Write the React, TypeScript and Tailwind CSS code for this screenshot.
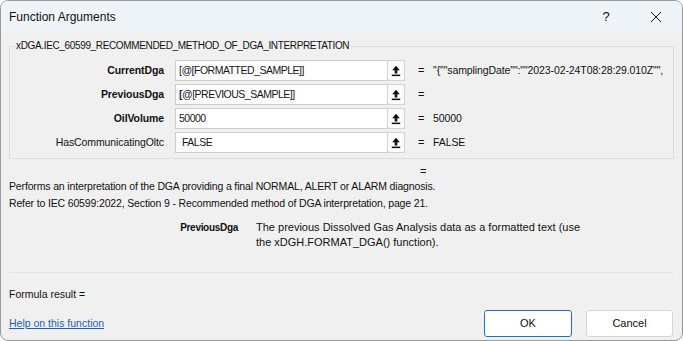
import React from "react";

function UpIcon() {
  return (
    <svg width="10" height="12" viewBox="0 0 10 12" className="block">
      <path d="M5 0.8 L1.2 5.2 H3.7 V8.6 H6.3 V5.2 H8.8 Z" fill="#111" />
      <rect x="0.8" y="9.6" width="8.4" height="1.5" fill="#111" />
    </svg>
  );
}

function Row({ label, bold, value, result, caret, indent }: { label: string; bold?: boolean; value: string; result: string; caret?: boolean; indent?: boolean }) {
  return (
    <div className="flex items-center h-[21px]">
      <div className={"w-[154px] text-right text-[10.5px] tracking-[-0.1px] text-[#111] " + (bold ? "font-bold" : "")}>{label}</div>
      <div className="ml-[11px] w-[230px] h-[21px] flex bg-white border border-[#cdcdcd]">
        <div className={"flex-1 flex items-center text-[10.5px] tracking-[-0.5px] text-[#161616] " + (indent ? "pl-[6px]" : "pl-[3px]")}>
          {caret ? (
            <>
              <span className="text-[#1b1b70] font-bold">[</span>
              {value}
            </>
          ) : (
            value
          )}
        </div>
        <div className="w-[18px] flex items-center justify-center bg-[#fbfbfb] border border-[#d3d3d3] rounded-[2px] -my-[1px] -mr-[1px] h-[21px]">
          <UpIcon />
        </div>
      </div>
      <div className="ml-[13px] w-[15px] text-[11px] text-[#111]">=</div>
      <div className="text-[10.5px] tracking-[-0.1px] text-[#111] whitespace-nowrap">{result}</div>
    </div>
  );
}

export default function App() {
  return (
    <div className="w-[683px] h-[341px] bg-[#f0f0f0] rounded-[8px] border border-[#9a9a9a] overflow-hidden flex flex-col" style={{ fontFamily: '"Liberation Sans", Arial, sans-serif' }}>
      <div className="h-[32px] bg-[#eff4f9] flex items-center pl-[8px] shrink-0">
        <div className="text-[12px] text-[#111] flex-1">Function Arguments</div>
        <div className="text-[13px] text-[#111] w-[20px] text-center mr-[34px]">?</div>
        <svg width="12" height="12" viewBox="0 0 12 12" className="mr-[20px]">
          <path d="M1 1 L11 11 M11 1 L1 11" stroke="#1a1a1a" strokeWidth="1" />
        </svg>
      </div>
      <fieldset className="mx-[8px] mt-[6px] border border-[#dcdcdc] pb-[5px] pt-[0px] shrink-0">
        <legend className="ml-[5px] px-[1px] text-[10px] tracking-[-0.35px] leading-[14px] text-[#111]">xDGA.IEC_60599_RECOMMENDED_METHOD_OF_DGA_INTERPRETATION</legend>
        <div className="flex flex-col gap-[3px] mt-[7px]">
          <Row label="CurrentDga" bold value="[@[FORMATTED_SAMPLE]]" result={'"{""samplingDate"":""2023-02-24T08:28:29.010Z"",'} />
          <Row label="PreviousDga" bold value="@[PREVIOUS_SAMPLE]]" caret result="" />
          <Row label="OilVolume" bold value="50000" result="50000" />
          <Row label="HasCommunicatingOltc" value="FALSE" result="FALSE" indent />
        </div>
      </fieldset>
      <div className="text-[11px] text-[#111] pl-[419px] mt-[5px] leading-[14px] shrink-0">=</div>
      <div className="pl-[8px] mt-0 text-[10.5px] tracking-[-0.15px] leading-[17px] text-[#111] shrink-0">
        <div>Performs an interpretation of the DGA providing a final NORMAL, ALERT or ALARM diagnosis.</div>
        <div>Refer to IEC 60599:2022, Section 9 - Recommended method of DGA interpretation, page 21.</div>
      </div>
      <div className="flex mt-[8px] leading-[15px] text-[#111] shrink-0">
        <div className="w-[237px] text-right font-bold text-[10px] tracking-[-0.3px]">PreviousDga</div>
        <div className="ml-[18px] w-[340px] text-[11px]">The previous Dissolved Gas Analysis data as a formatted text (use the xDGH.FORMAT_DGA() function).</div>
      </div>
      <div className="mx-[8px] mt-[22px] border-t border-[#e3e3e3] shrink-0" />
      <div className="pl-[8px] mt-[14px] text-[10.5px] leading-[14px] text-[#111] shrink-0">Formula result =</div>
      <div className="flex items-center mt-[9px] pr-[9px] shrink-0">
        <a className="ml-[8px] text-[10.5px] text-[#1a5fc0] underline flex-1">Help on this function</a>
        <button className="w-[88px] h-[27px] bg-white border border-[#1e6fc8] rounded-[3px] text-[11px] text-[#111]">OK</button>
        <button className="ml-[14px] w-[87px] h-[27px] bg-white border border-[#d5d5d5] rounded-[3px] text-[11px] text-[#111]">Cancel</button>
      </div>
    </div>
  );
}
